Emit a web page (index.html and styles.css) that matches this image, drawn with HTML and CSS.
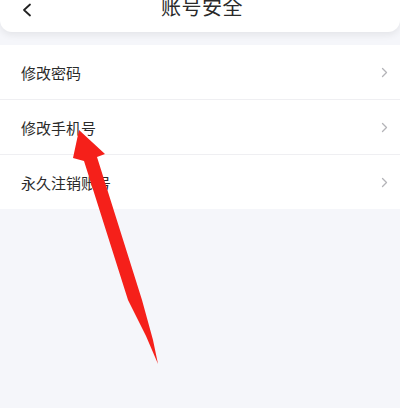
FILE: index.html
```html
<!DOCTYPE html>
<html lang="zh-CN">
<head>
<meta charset="utf-8">
<title>账号安全</title>
<link rel="stylesheet" href="styles.css">
</head>
<body>
<div class="page">
  <header class="header">
    <svg class="back" width="10" height="14" viewBox="0 0 10 14"><polyline points="8,1.5 2,7 8,12.5" fill="none" stroke="#222" stroke-width="1.8" stroke-linecap="round" stroke-linejoin="round"/></svg>
    <div class="title">账号安全</div>
  </header>
  <ul class="list">
    <li class="row"><span class="label">修改密码</span><svg class="chev" width="7" height="11" viewBox="0 0 7 11"><polyline points="1.5,1.5 5.5,5.5 1.5,9.5" fill="none" stroke="#b4b4b8" stroke-width="1.3" stroke-linecap="round" stroke-linejoin="round"/></svg></li>
    <li class="row"><span class="label">修改手机号</span><svg class="chev" width="7" height="11" viewBox="0 0 7 11"><polyline points="1.5,1.5 5.5,5.5 1.5,9.5" fill="none" stroke="#b4b4b8" stroke-width="1.3" stroke-linecap="round" stroke-linejoin="round"/></svg></li>
    <li class="row"><span class="label">永久注销账号</span><svg class="chev" width="7" height="11" viewBox="0 0 7 11"><polyline points="1.5,1.5 5.5,5.5 1.5,9.5" fill="none" stroke="#b4b4b8" stroke-width="1.3" stroke-linecap="round" stroke-linejoin="round"/></svg></li>
  </ul>
  <svg class="arrow" width="400" height="408" viewBox="0 0 400 408">
    <path d="M79,130 L105,154 L97,157 L142,300 L153,340 L158,364 L146,336 L128,300 L84,161 L73,158 Z" fill="#f5201a"/>
  </svg>
</div>
</body>
</html>
```
FILE: styles.css
```css
html, body {
  margin: 0;
  padding: 0;
}
body {
  background: #f5f6fa;
  font-family: "Noto Sans CJK SC", "Noto Sans", sans-serif;
  color: #333;
  width: 400px;
  height: 408px;
  overflow: hidden;
}
.page {
  position: relative;
  width: 400px;
  height: 408px;
}
.header {
  height: 32px;
  background: #fff;
  border-radius: 0 0 12px 12px;
  box-shadow: 0 3px 7px rgba(0, 0, 0, 0.07);
  display: flex;
  align-items: flex-start;
  justify-content: center;
  position: relative;
  overflow: hidden;
}
.back {
  position: absolute;
  left: 22px;
  top: 3px;
}
.title {
  font-size: 20px;
  line-height: 20px;
  margin-top: -3px;
  margin-left: 4px;
  color: #2a2a2a;
  letter-spacing: 0.5px;
}
.list {
  list-style: none;
  margin: 13px 0 0 0;
  padding: 0;
  background: #fff;
}
.row {
  height: 54px;
  display: flex;
  align-items: center;
  justify-content: space-between;
  padding: 0 12px 0 21px;
  border-bottom: 1px solid #efeff2;
}
.row:last-child {
  border-bottom: none;
}
.label {
  font-size: 15px;
  color: #2b2b2b;
}
.chev {
  display: block;
}
.arrow {
  position: absolute;
  left: 0;
  top: 0;
  pointer-events: none;
}
```
